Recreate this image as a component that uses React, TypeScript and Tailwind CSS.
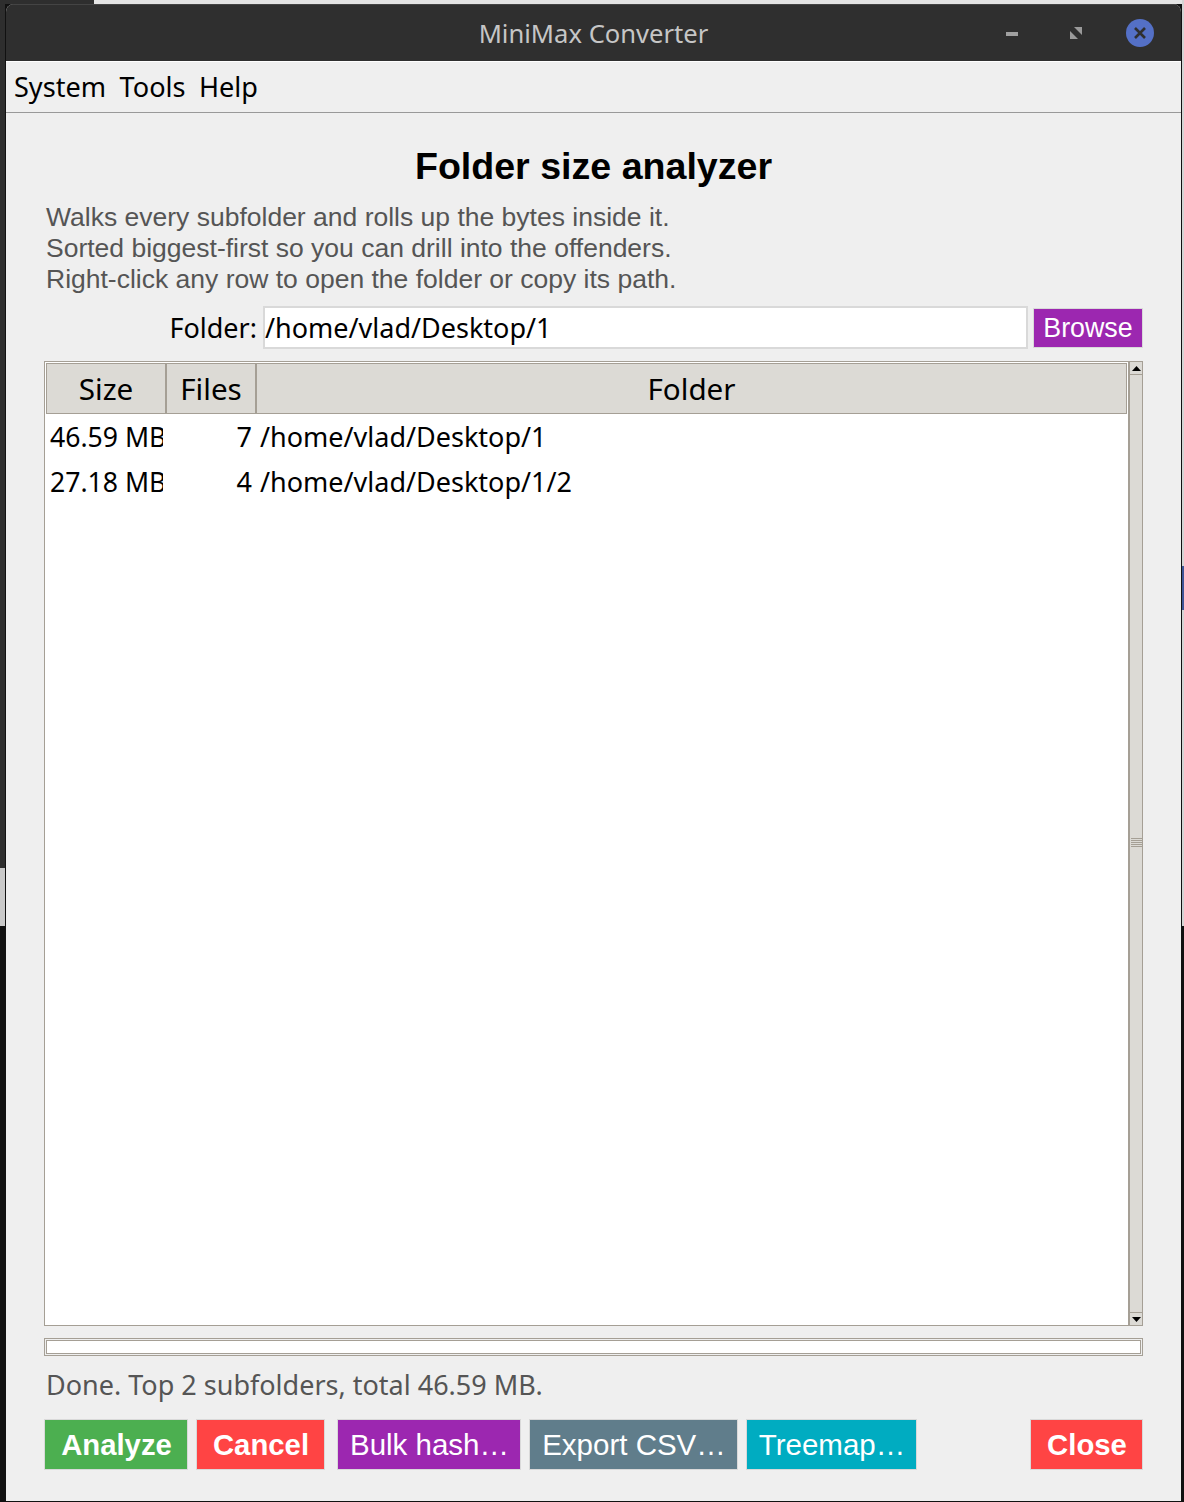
import React from 'react';

const rows = [
  { size: '46.59 MB', files: '7', folder: '/home/vlad/Desktop/1' },
  { size: '27.18 MB', files: '4', folder: '/home/vlad/Desktop/1/2' },
];

const actions = [
  { label: 'Analyze', w: 'w-[144px]', color: 'bg-[#4caf50]', bold: true },
  { label: 'Cancel', w: 'w-[129px] ml-[8px]', color: 'bg-[#ff4444]', bold: true },
  { label: 'Bulk hash…', w: 'w-[184px] ml-[12px]', color: 'bg-[#9c27b0]', bold: false },
  { label: 'Export CSV…', w: 'w-[209px] ml-[8px]', color: 'bg-[#607d8b]', bold: false },
  { label: 'Treemap…', w: 'w-[171px] ml-[8px]', color: 'bg-[#00acc1]', bold: false },
];

const noto = 'font-["Noto_Sans",sans-serif]';

function ActionButton({ label, w, color, bold }: { label: string; w: string; color: string; bold: boolean }) {
  return (
    <button
      className={`${w} ${color} h-[51px] pl-px border border-[#d9d9d9] text-white leading-none ${bold ? 'font-bold text-[29.3px]' : 'text-[29.5px]'}`}
    >
      {label}
    </button>
  );
}

function HeaderCell({ label, w }: { label: string; w: string }) {
  return (
    <div className={`${w} h-full pt-px flex items-center justify-center bg-[#dcdad5] border border-[#a59f95] text-[29.6px] text-black ${noto}`}>
      {label}
    </div>
  );
}

export default function App() {
  return (
    <div className="relative w-[1184px] h-[1502px] overflow-hidden bg-[#111] font-['Liberation_Sans',sans-serif]">
      {/* desktop peeking out behind the window */}
      <div className="absolute left-0 top-0 w-[94px] h-[4px] bg-[#2e2e2e]" />
      <div className="absolute left-[94px] top-0 w-[1090px] h-[4px] bg-[#e4e4e4]" />
      <div className="absolute left-0 top-0 w-[5px] h-[868px] bg-[#2e2e2e]" />
      <div className="absolute left-0 top-[868px] w-[5px] h-[58px] bg-[#c9c9c9]" />
      <div className="absolute left-[1182px] top-0 w-[2px] h-[926px] bg-[#d4d4d4]" />
      <div className="absolute left-[1182px] top-[566px] w-[2px] h-[44px] bg-[#3f5596]" />

      <div className="relative ml-[6px] mt-[4px] w-[1175px] h-[1497px] bg-[#efefef] rounded-t-[8px] overflow-hidden">
        {/* title bar */}
        <div className="h-[57px] pt-[2px] bg-[#2f2f2f] border-t border-[#444] flex items-center justify-center relative">
          <span className={`text-[25.6px] text-[#c6c6c6] ${noto}`}>MiniMax Converter</span>
          <div className="absolute right-[163px] top-[27px] w-[12px] h-[4px] bg-[#a0a0a0]" />
          <svg className="absolute right-[99px] top-[22px]" width="12" height="12" viewBox="0 0 12 12">
            <path d="M4 0H12V8ZM0 4L8 12H0Z" fill="#9a9a9a" />
          </svg>
          <div className="absolute right-[27px] top-[14px] w-[28px] h-[28px] rounded-full bg-[#5470c6] flex items-center justify-center">
            <svg width="14" height="14" viewBox="0 0 14 14">
              <path d="M2 2L12 12M12 2L2 12" stroke="#2f2f2f" strokeWidth="2.6" />
            </svg>
          </div>
        </div>

        {/* menu bar */}
        <div className={`h-[52px] border-t border-white border-b-[#999] border-b pl-[8px] flex items-center gap-[13.5px] text-[27.1px] text-black ${noto}`}>
          <span>System</span>
          <span>Tools</span>
          <span>Help</span>
        </div>

        <div className="px-[38px]">
          <h1 className="text-center text-[37.6px] leading-[42px] font-bold text-black mt-[32px]">Folder size analyzer</h1>
          <div className="mt-[15px] pl-[2px] text-[26.5px] leading-[31px] text-[#555]">
            <div>Walks every subfolder and rolls up the bytes inside it.</div>
            <div>Sorted biggest-first so you can drill into the offenders.</div>
            <div>Right-click any row to open the folder or copy its path.</div>
          </div>

          {/* folder row */}
          <div className="mt-[11px] h-[43px] flex items-center">
            <span className={`w-[219px] pr-[6px] pt-[2px] text-right text-[27px] text-black ${noto}`}>Folder:</span>
            <div className={`w-[765px] h-[43px] pt-[2px] bg-white border-2 border-[#d9d9d9] flex items-center text-[27px] text-black ${noto}`}>
              /home/vlad/Desktop/1
            </div>
            <button className="ml-[5px] w-[110px] h-[40px] mt-[1px] bg-[#9c27b0] border border-[#d9d9d9] text-white text-[26.8px] leading-none">
              Browse
            </button>
          </div>

          {/* table */}
          <div className="mt-[12px] h-[965px] flex border border-[#a59f95] border-r-0 bg-white">
            <div className="flex-1 min-w-0 pl-px pt-px pr-px">
              <div className="h-[51px] flex">
                <HeaderCell label="Size" w="w-[120px]" />
                <HeaderCell label="Files" w="w-[90px]" />
                <HeaderCell label="Folder" w="flex-1" />
              </div>
              <div className={`pt-px text-[27px] text-black ${noto}`}>
                {rows.map((row) => (
                  <div key={row.folder} className="h-[45px] flex items-center">
                    <div className="w-[117px] pl-[4px] overflow-hidden whitespace-nowrap text-[26.6px]">{row.size}</div>
                    <div className="w-[89px] text-right">{row.files}</div>
                    <div className="pl-[8px] whitespace-nowrap">{row.folder}</div>
                  </div>
                ))}
              </div>
            </div>

            {/* scrollbar */}
            <div className="w-[15px] flex flex-col bg-[#dcdad5] border-l-2 border-r border-[#a59f95]">
              <div className="h-[13px] border-b border-[#a59f95] flex items-center justify-center">
                <svg width="9" height="5" viewBox="0 0 9 5"><path d="M4.5 0L9 5H0Z" fill="#000" /></svg>
              </div>
              <div className="flex-1 flex items-center justify-center">
                <div className="w-[11px] flex flex-col gap-px mt-[-3px]">
                  <div className="h-px bg-[#a59f95]" />
                  <div className="h-px bg-[#a59f95]" />
                  <div className="h-px bg-[#a59f95]" />
                  <div className="h-px bg-[#a59f95]" />
                  <div className="h-px bg-[#a59f95]" />
                </div>
              </div>
              <div className="h-[13px] border-t border-[#a59f95] flex items-center justify-center">
                <svg width="9" height="5" viewBox="0 0 9 5"><path d="M0 0H9L4.5 5Z" fill="#000" /></svg>
              </div>
            </div>
          </div>

          {/* progress */}
          <div className="mt-[12px] h-[18px] border border-[#a59f95] p-px">
            <div className="h-full bg-white border border-[#a59f95]" />
          </div>

          <div className={`mt-[10px] h-[38px] pl-[2px] flex items-center text-[27px] text-[#555] ${noto}`}>
            Done. Top 2 subfolders, total 46.59 MB.
          </div>

          {/* actions */}
          <div className="mt-[15px] flex">
            {actions.map((a) => (
              <ActionButton key={a.label} {...a} />
            ))}
            <div className="flex-1" />
            <ActionButton label="Close" w="w-[113px]" color="bg-[#ff4444]" bold />
          </div>
        </div>
      </div>
    </div>
  );
}
